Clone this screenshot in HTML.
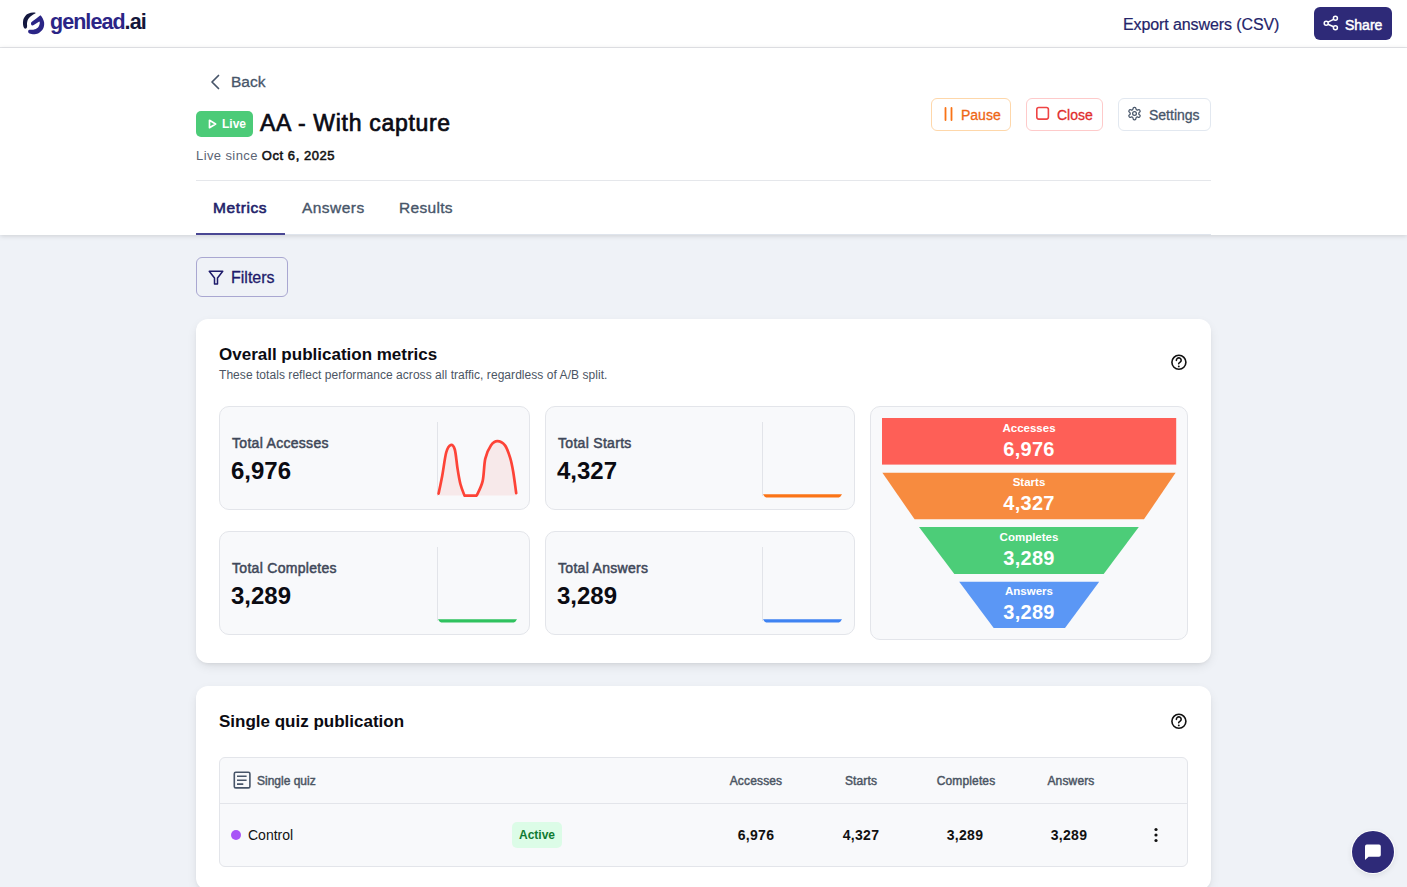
<!DOCTYPE html>
<html><head><meta charset="utf-8">
<style>
*{box-sizing:border-box;margin:0;padding:0}
html,body{width:1407px;height:887px;overflow:hidden}
body{font-family:"Liberation Sans",sans-serif;background:#eff2f7;position:relative;color:#111}
.abs{position:absolute}
.t{position:absolute;white-space:nowrap;line-height:normal}
#hdr{left:0;top:0;width:1407px;height:48px;background:#fff;border-bottom:1px solid #e5e7eb}
#top{left:0;top:48px;width:1407px;height:187px;background:#fff;box-shadow:0 1px 5px rgba(0,0,0,.15)}
.btn{position:absolute;border-radius:6px;background:#fff}
.card{position:absolute;background:#fff;border-radius:12px;box-shadow:0 4px 12px -2px rgba(0,0,0,.11),0 2px 4px -2px rgba(0,0,0,.10)}
.mc{position:absolute;background:#f8f9fb;border:1px solid #e3e5ea;border-radius:10px}
.mc .lbl{position:absolute;left:12px;top:28px;font-size:14px;color:#3f4859;-webkit-text-stroke:0.5px #3f4859;letter-spacing:0.3px}
.mc .val{position:absolute;left:11px;top:50px;font-size:24px;color:#0b0b12;font-weight:bold}
.fl{left:870px;width:318px;text-align:center;font-size:11.5px;font-weight:bold;color:#fff;letter-spacing:0px}
.fv{left:870px;width:318px;text-align:center;font-size:20px;font-weight:bold;color:#fff;letter-spacing:0.3px}
.th{top:774px;width:100px;text-align:center;font-size:12px;color:#4b5563;-webkit-text-stroke:0.45px #4b5563;letter-spacing:0.15px}
.td{top:827px;width:100px;text-align:center;font-size:14px;font-weight:bold;color:#111;letter-spacing:0.3px}
</style></head>
<body>
<div id="hdr" class="abs"></div>
<div id="top" class="abs"></div>

<!-- logo -->
<svg class="abs" style="left:0;top:0" width="50" height="40" viewBox="0 0 50 40">
  <path d="M35.9 13.1 C34 12.3 31 12.5 28.1 13.75 C26.5 14.5 25.5 15.6 24.8 16.8 C23.8 18.3 23.3 19.5 23.1 20.9 C22.9 22.3 22.9 23.6 23.1 24.9 C23.3 26.2 23.6 27.3 24.1 28 C24.5 28.6 25.3 28.8 25.9 28.6 C26.6 28.3 27.2 27.6 27.1 25.6 C26.9 24.6 26.9 23.5 27.1 22.5 C27.3 21.3 27.6 20.2 28.1 19.2 C28.8 18.1 29.6 17.2 30.5 16.5 C31.4 15.8 32.3 15.2 33.2 14.6 C34.2 14 35.2 13.6 35.9 13.1 Z" fill="#14183f"/>
  <path d="M31.0 23.4 C31.0 22.5 31.5 22 32.2 21.5 L36.3 18.5 L40.4 15.2 C42 16.5 43.6 19.5 44.1 22.3 C44.4 25 44 27.5 42.8 29.3 C41.5 31 40 32.4 38.5 33.2 C36.8 34 34.5 34.3 32.8 34.2 C31.2 34.1 29.5 33.6 28.8 33 C28.1 32.4 28.0 31.5 28.3 30.6 C28.6 29.9 29.2 29.6 29.8 29.7 C31.5 29.9 33.4 29.8 34.9 29.3 C36.3 28.9 37.6 28.0 38.4 27 C39.2 26 39.7 24.5 39.8 22.8 C39.8 22.2 39.6 21.7 39.3 21.5 L34.1 24.7 C33.5 25.2 32.8 25.6 32.2 25.5 C31.4 25.3 31 24.4 31.0 23.4 Z" fill="#2b2586"/>
</svg>
<div class="t" style="left:50px;top:10px;font-size:21.5px;font-weight:bold;color:#2b2586;letter-spacing:-0.95px">genlead<span style="color:#14163a">.ai</span></div>

<div class="t" style="left:1123px;top:16px;font-size:16px;color:#24246a;letter-spacing:-0.1px;-webkit-text-stroke:0.2px #24246a">Export answers (CSV)</div>
<div class="btn" style="left:1314px;top:7px;width:78px;height:33px;background:#2e2a78;"></div>
<svg class="abs" style="left:1323px;top:15px" width="16" height="16" viewBox="0 0 16 16"><g fill="none" stroke="#fff" stroke-width="1.5"><circle cx="12.4" cy="3.3" r="2"/><circle cx="3.2" cy="8.2" r="2"/><circle cx="12.4" cy="12.8" r="2"/><path d="M5 7.2 L10.6 4.3 M5 9.2 L10.6 11.8"/></g></svg>
<div class="t" style="left:1345px;top:17px;font-size:14px;color:#fff;letter-spacing:0px;-webkit-text-stroke:0.5px #fff">Share</div>

<!-- back -->
<svg class="abs" style="left:208px;top:74px" width="14" height="16" viewBox="0 0 14 16"><path d="M10.5 1.5 L4 8 L10.5 14.5" stroke="#475569" stroke-width="1.7" fill="none" stroke-linecap="round" stroke-linejoin="round"/></svg>
<div class="t" style="left:231px;top:73px;font-size:15.5px;color:#475569;-webkit-text-stroke:0.3px #475569">Back</div>

<!-- live badge -->
<div class="abs" style="left:196px;top:111px;width:57px;height:26px;background:#4ccb78;border-radius:5px"></div>
<svg class="abs" style="left:208px;top:119px" width="9" height="10" viewBox="0 0 9 10"><path d="M1.5 1.3 L7.6 5 L1.5 8.7 Z" stroke="#fff" stroke-width="1.7" fill="none" stroke-linejoin="round"/></svg>
<div class="t" style="left:222px;top:117px;font-size:12px;font-weight:bold;color:#fff">Live</div>
<div class="t" style="left:260px;top:110px;font-size:23px;color:#0b0b14;letter-spacing:0.7px;-webkit-text-stroke:0.7px #0b0b14">AA - With capture</div>
<div class="t" style="left:196px;top:148px;font-size:13px;color:#5b6475;letter-spacing:0.4px">Live since <span style="color:#111;letter-spacing:0.55px;-webkit-text-stroke:0.55px #111">Oct 6, 2025</span></div>

<!-- action buttons -->
<div class="btn" style="left:931px;top:98px;width:80px;height:33px;border:1px solid #fed7aa"></div>
<div class="btn" style="left:1026px;top:98px;width:77px;height:33px;border:1px solid #fecaca"></div>
<div class="btn" style="left:1118px;top:98px;width:93px;height:33px;border:1px solid #e2e8f0"></div>
<div class="t" style="left:961px;top:107px;font-size:14px;color:#ee6614;-webkit-text-stroke:0.3px #ee6614">Pause</div>
<div class="t" style="left:1057px;top:107px;font-size:14px;color:#e02d2d;-webkit-text-stroke:0.3px #e02d2d">Close</div>
<div class="t" style="left:1149px;top:107px;font-size:14px;color:#475569;-webkit-text-stroke:0.3px #475569">Settings</div>
<svg class="abs" style="left:941.5px;top:106px" width="12" height="16" viewBox="0 0 12 16"><path d="M3.5 2 V14 M9.5 2 V14" stroke="#f97316" stroke-width="1.8" stroke-linecap="round"/></svg>
<svg class="abs" style="left:1035px;top:106px" width="16" height="16" viewBox="0 0 16 16"><rect x="1.8" y="1.5" width="11.6" height="11.6" rx="2" fill="none" stroke="#ef4444" stroke-width="1.6"/></svg>
<svg class="abs" style="left:1127px;top:106px" width="15" height="15" viewBox="0 0 24 24"><g fill="none" stroke="#475569" stroke-width="2" stroke-linecap="round" stroke-linejoin="round"><path d="M12.22 2h-.44a2 2 0 0 0-2 2v.18a2 2 0 0 1-1 1.730l-.43.25a2 2 0 0 1-2 0l-.15-.08a2 2 0 0 0-2.73.73l-.22.38a2 2 0 0 0 .73 2.73l.15.1a2 2 0 0 1 1 1.72v.51a2 2 0 0 1-1 1.74l-.15.09a2 2 0 0 0-.73 2.73l.22.38a2 2 0 0 0 2.73.73l.15-.08a2 2 0 0 1 2 0l.43.25a2 2 0 0 1 1 1.73V20a2 2 0 0 0 2 2h.44a2 2 0 0 0 2-2v-.18a2 2 0 0 1 1-1.73l.43-.25a2 2 0 0 1 2 0l.15.08a2 2 0 0 0 2.73-.73l.22-.39a2 2 0 0 0-.73-2.730l-.15-.08a2 2 0 0 1-1-1.74v-.5a2 2 0 0 1 1-1.74l.15-.09a2 2 0 0 0 .73-2.73l-.22-.38a2 2 0 0 0-2.73-.73l-.15.08a2 2 0 0 1-2 0l-.43-.25a2 2 0 0 1-1-1.73V4a2 2 0 0 0-2-2z"/><circle cx="12" cy="12" r="3"/></g></svg>

<!-- divider -->
<div class="abs" style="left:196px;top:180px;width:1015px;height:1px;background:#e5e7eb"></div>

<!-- tabs -->
<div class="abs" style="left:196px;top:234px;width:1015px;height:1px;background:#dfe4ec"></div>
<div class="t" style="left:213px;top:199px;font-size:15.5px;color:#231f6b;letter-spacing:0.6px;-webkit-text-stroke:0.6px #231f6b">Metrics</div>
<div class="t" style="left:302px;top:199px;font-size:15.5px;color:#475569;letter-spacing:0.45px;-webkit-text-stroke:0.35px #475569">Answers</div>
<div class="t" style="left:399px;top:199px;font-size:15.5px;color:#475569;letter-spacing:0.3px;-webkit-text-stroke:0.35px #475569">Results</div>
<div class="abs" style="left:196px;top:233px;width:89px;height:2px;background:#4a4794"></div>

<!-- filters -->
<div class="btn" style="left:196px;top:257px;width:92px;height:40px;border:1px solid #a9a7d1;background:transparent"></div>
<svg class="abs" style="left:207px;top:268.6px" width="18" height="18" viewBox="0 0 24 24"><path d="M3 3 H21 L14 12 V20 L10 20 V12 Z" fill="none" stroke="#1e1b6b" stroke-width="2" stroke-linejoin="round"/></svg>
<div class="t" style="left:231px;top:269px;font-size:16px;color:#1e1b6b;-webkit-text-stroke:0.3px #1e1b6b">Filters</div>

<!-- card 1 -->
<div class="card" style="left:196px;top:319px;width:1015px;height:344px"></div>
<div class="t" style="left:219px;top:345px;font-size:17px;font-weight:bold;color:#0b0b12">Overall publication metrics</div>
<div class="t" style="left:219px;top:368px;font-size:12px;color:#4b5563;letter-spacing:0.05px">These totals reflect performance across all traffic, regardless of A/B split.</div>
<svg class="abs" style="left:1170px;top:353px" width="18" height="18" viewBox="0 0 18 18"><circle cx="8.9" cy="9.3" r="7" fill="none" stroke="#111" stroke-width="1.6"/><path d="M6.4 7.4 A2.4 2.3 0 1 1 10.4 8.9 C9.5 9.5 8.8 10.1 8.7 10.7" fill="none" stroke="#111" stroke-width="1.6" stroke-linecap="round"/><circle cx="8.8" cy="13.4" r="0.95" fill="#111"/></svg>

<div class="mc" style="left:219px;top:406px;width:311px;height:104px"><div class="lbl">Total Accesses</div><div class="val">6,976</div></div>
<div class="mc" style="left:545px;top:406px;width:310px;height:104px"><div class="lbl">Total Starts</div><div class="val">4,327</div></div>
<div class="mc" style="left:219px;top:531px;width:311px;height:104px"><div class="lbl">Total Completes</div><div class="val">3,289</div></div>
<div class="mc" style="left:545px;top:531px;width:310px;height:104px"><div class="lbl">Total Answers</div><div class="val">3,289</div></div>
<div class="mc" style="left:870px;top:406px;width:318px;height:234px"></div>

<!-- sparklines -->
<svg class="abs" style="left:430px;top:415px" width="95" height="90" viewBox="430 415 95 90">
  <line x1="437.5" y1="422" x2="437.5" y2="496" stroke="#e2e4e9" stroke-width="1"/>
  <path d="M438.6 493.6 C439.2 490.7 440.9 482.8 442.2 475.9 C443.5 469.0 444.8 457.7 446.2 452.5 C447.6 447.3 449.4 445.4 450.8 444.9 C452.2 444.4 453.7 445.7 454.8 449.5 C455.9 453.3 456.5 461.9 457.4 467.7 C458.3 473.4 459.2 479.4 460.4 484.0 C461.6 488.6 463.8 493.7 464.5 495.6 L476.7 495.6 C477.7 493.2 481.3 487.1 482.7 480.9 C484.1 474.7 483.9 464.5 485.3 458.6 C486.7 452.7 488.9 448.3 490.9 445.4 C492.9 442.5 495.0 441.2 497.4 441.2 C499.8 441.2 502.9 442.7 505.0 445.4 C507.1 448.1 508.7 453.2 510.1 457.6 C511.5 462.0 512.2 465.9 513.2 471.8 C514.2 477.7 515.7 489.6 516.2 493.1 L516.2 495.6 L438.6 495.6 Z" fill="#f7e9ea"/>
  <path d="M438.6 493.6 C439.2 490.7 440.9 482.8 442.2 475.9 C443.5 469.0 444.8 457.7 446.2 452.5 C447.6 447.3 449.4 445.4 450.8 444.9 C452.2 444.4 453.7 445.7 454.8 449.5 C455.9 453.3 456.5 461.9 457.4 467.7 C458.3 473.4 459.2 479.4 460.4 484.0 C461.6 488.6 463.8 493.7 464.5 495.6 L476.7 495.6 C477.7 493.2 481.3 487.1 482.7 480.9 C484.1 474.7 483.9 464.5 485.3 458.6 C486.7 452.7 488.9 448.3 490.9 445.4 C492.9 442.5 495.0 441.2 497.4 441.2 C499.8 441.2 502.9 442.7 505.0 445.4 C507.1 448.1 508.7 453.2 510.1 457.6 C511.5 462.0 512.2 465.9 513.2 471.8 C514.2 477.7 515.7 489.6 516.2 493.1" fill="none" stroke="#fd4337" stroke-width="2.7" stroke-linecap="round" stroke-linejoin="round"/>
</svg>
<svg class="abs" style="left:755px;top:415px" width="95" height="90" viewBox="755 415 95 90">
  <line x1="762.5" y1="422" x2="762.5" y2="496" stroke="#e2e4e9" stroke-width="1"/>
  <path d="M763 494.2 H842 L840.5 496.6 Q840 497.4 838.8 497.4 H766.2 Q765 497.4 764.5 496.6 Z" fill="#fb7417"/>
</svg>
<svg class="abs" style="left:430px;top:540px" width="95" height="90" viewBox="430 540 95 90">
  <line x1="437.5" y1="547" x2="437.5" y2="621" stroke="#e2e4e9" stroke-width="1"/>
  <path d="M438 619.2 H517 L515.5 621.6 Q515 622.4 513.8 622.4 H441.2 Q440 622.4 439.5 621.6 Z" fill="#2fc25f"/>
</svg>
<svg class="abs" style="left:755px;top:540px" width="95" height="90" viewBox="755 540 95 90">
  <line x1="762.5" y1="547" x2="762.5" y2="621" stroke="#e2e4e9" stroke-width="1"/>
  <path d="M763 619.2 H842 L840.5 621.6 Q840 622.4 838.8 622.4 H766.2 Q765 622.4 764.5 621.6 Z" fill="#3f83f2"/>
</svg>

<!-- funnel -->
<svg class="abs" style="left:870px;top:406px" width="318" height="234" viewBox="870 406 318 234">
  <rect x="882" y="418" width="294.2" height="46.6" fill="#fe5f57"/>
  <path d="M882.4 472.8 L1175.6 472.8 L1144 519.3 L914.6 519.3 Z" fill="#f78b3f"/>
  <path d="M919 527.1 L1138.8 527.1 L1103.7 573.9 L954.3 573.9 Z" fill="#4ccd78"/>
  <path d="M959.2 581.8 L1099.2 581.8 L1065 628 L993.7 628 Z" fill="#5b97f5"/>
</svg>
<div class="t fl" style="top:422px">Accesses</div><div class="t fv" style="top:438px">6,976</div>
<div class="t fl" style="top:476px">Starts</div><div class="t fv" style="top:492px">4,327</div>
<div class="t fl" style="top:531px">Completes</div><div class="t fv" style="top:547px">3,289</div>
<div class="t fl" style="top:585px">Answers</div><div class="t fv" style="top:601px">3,289</div>

<!-- card 2 -->
<div class="card" style="left:196px;top:686px;width:1015px;height:204px"></div>
<div class="t" style="left:219px;top:712px;font-size:17px;font-weight:bold;color:#0b0b12">Single quiz publication</div>
<svg class="abs" style="left:1170px;top:712px" width="18" height="18" viewBox="0 0 18 18"><circle cx="8.9" cy="9.3" r="7" fill="none" stroke="#111" stroke-width="1.6"/><path d="M6.4 7.4 A2.4 2.3 0 1 1 10.4 8.9 C9.5 9.5 8.8 10.1 8.7 10.7" fill="none" stroke="#111" stroke-width="1.6" stroke-linecap="round"/><circle cx="8.8" cy="13.4" r="0.95" fill="#111"/></svg>
<div class="abs" style="left:219px;top:757px;width:969px;height:110px;background:#f8f9fb;border:1px solid #e3e5ea;border-radius:6px"></div>
<div class="abs" style="left:220px;top:803px;width:967px;height:1px;background:#e3e5ea"></div>

<!-- table -->
<svg class="abs" style="left:233px;top:771px" width="18" height="18" viewBox="0 0 18 18"><g fill="none" stroke="#475569" stroke-width="1.6"><rect x="1.3" y="1.3" width="15.6" height="15.6" rx="1.5"/><path d="M4 5.3 H13.6 M4 9.2 H13.6 M4 13.1 H10.3"/></g></svg>
<div class="t" style="left:257px;top:774px;font-size:12px;color:#4b5563;-webkit-text-stroke:0.45px #4b5563;letter-spacing:0px">Single quiz</div>
<div class="t th" style="left:706px;">Accesses</div>
<div class="t th" style="left:811px;">Starts</div>
<div class="t th" style="left:916px;">Completes</div>
<div class="t th" style="left:1021px;">Answers</div>
<div class="abs" style="left:231px;top:830px;width:10px;height:10px;border-radius:50%;background:#a855f7"></div>
<div class="t" style="left:248px;top:827px;font-size:14px;color:#111">Control</div>
<div class="abs" style="left:512px;top:822px;width:50px;height:26px;border-radius:5px;background:#dcfce7"></div>
<div class="t" style="left:512px;top:828px;width:50px;text-align:center;font-size:12px;font-weight:bold;color:#0f7a33">Active</div>
<div class="t td" style="left:706px;">6,976</div>
<div class="t td" style="left:811px;">4,327</div>
<div class="t td" style="left:915px;">3,289</div>
<div class="t td" style="left:1019px;">3,289</div>
<svg class="abs" style="left:1152px;top:827px" width="8" height="16" viewBox="0 0 8 16"><g fill="#111"><circle cx="4" cy="2.5" r="1.6"/><circle cx="4" cy="8" r="1.6"/><circle cx="4" cy="13.5" r="1.6"/></g></svg>

<!-- chat -->
<div class="abs" style="left:1352px;top:831px;width:42px;height:42px;border-radius:50%;background:#2e2a78;box-shadow:0 0 0 1px #fff,0 2px 6px rgba(0,0,0,.1)"></div>
<svg class="abs" style="left:1364px;top:844px" width="18" height="17" viewBox="0 0 18 17"><path d="M1 2.4 Q1 0.6 2.8 0.6 H15 Q16.8 0.6 16.8 2.4 V11 Q16.8 12.8 15 12.8 H4.6 L1 16 Z" fill="#fff"/></svg>
</body></html>
